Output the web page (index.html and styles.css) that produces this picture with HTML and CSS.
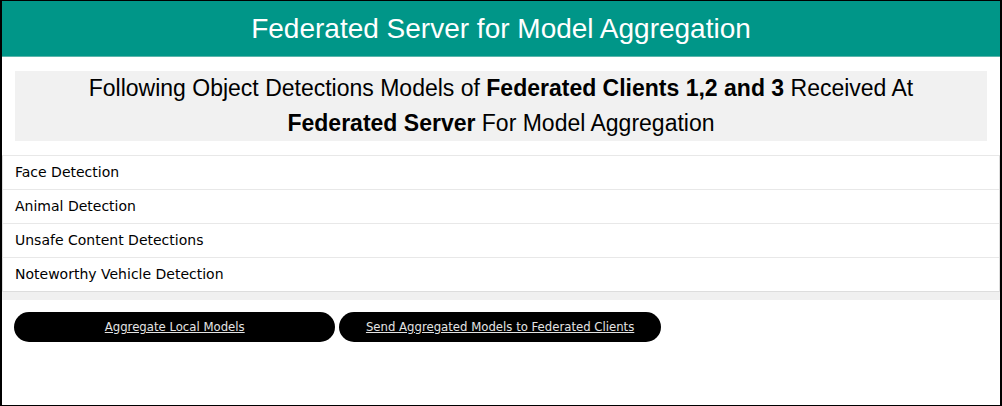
FILE: index.html
```html
<!DOCTYPE html>
<html lang="en">
<head>
<meta charset="utf-8">
<meta name="viewport" content="width=device-width, initial-scale=1">
<title>Federated Server for Model Aggregation</title>
<link rel="stylesheet" href="styles.css">
</head>
<body>
<div class="page">
  <header class="header"><h1 class="title">Federated Server for Model Aggregation</h1></header>
  <main>
    <section class="card">
      <h2 class="summary">Following Object Detections Models of <b>Federated Clients 1,2 and 3</b> Received At <b class="together">Federated Server</b> For Model Aggregation</h2>
      <ul class="models">
        <li class="model">Face Detection</li>
        <li class="model">Animal Detection</li>
        <li class="model">Unsafe Content Detections</li>
        <li class="model">Noteworthy Vehicle Detection</li>
      </ul>
    </section>
    <nav class="actions">
      <a class="action" href="#aggregate">Aggregate Local Models</a>
      <a class="action" href="#send">Send Aggregated Models to Federated Clients</a>
    </nav>
  </main>
</div>
</body>
</html>
```
FILE: styles.css
```css
* {
  box-sizing: border-box;
}

body {
  margin: 0;
  font-family: "DejaVu Sans", sans-serif;
  color: #000;
}

.page {
  min-height: 100vh;
  border: 1px solid #000;
  border-width: 1px 2px;
  background: #fff;
}

.header {
  padding: 8px 12px;
  border-bottom: 1px solid #5bb5ab;
  background: #009688;
  color: #fff;
  text-align: center;
}

.title,
.summary {
  margin: 0;
  font-family: "Liberation Sans", Arial, sans-serif;
  font-weight: 400;
}

.title {
  font-size: 28px;
  line-height: 39px;
}

.card {
  border-bottom: 8px solid #f0f0f0;
}

.summary {
  margin: 14px 13px;
  background: #f1f1f1;
  font-size: 23px;
  line-height: 35px;
  text-align: center;
}

.together {
  white-space: nowrap;
}

.models {
  margin: 0;
  padding: 0;
  border: 1px solid #ddd;
  border-top-color: #e8e8e8;
  list-style: none;
}

.model {
  padding: 0 12px;
  font-size: 14px;
  line-height: 33px;
}

.model + .model {
  border-top: 1px solid #e8e8e8;
}

.actions {
  display: flex;
  gap: 4px;
  padding: 12px;
}

.action {
  width: 33%;
  border-radius: 15px;
  background: #000;
  color: #e4e4e4;
  font-family: "DejaVu Sans Condensed", "DejaVu Sans", sans-serif;
  font-size: 13px;
  line-height: 30px;
  text-align: center;
}
```
